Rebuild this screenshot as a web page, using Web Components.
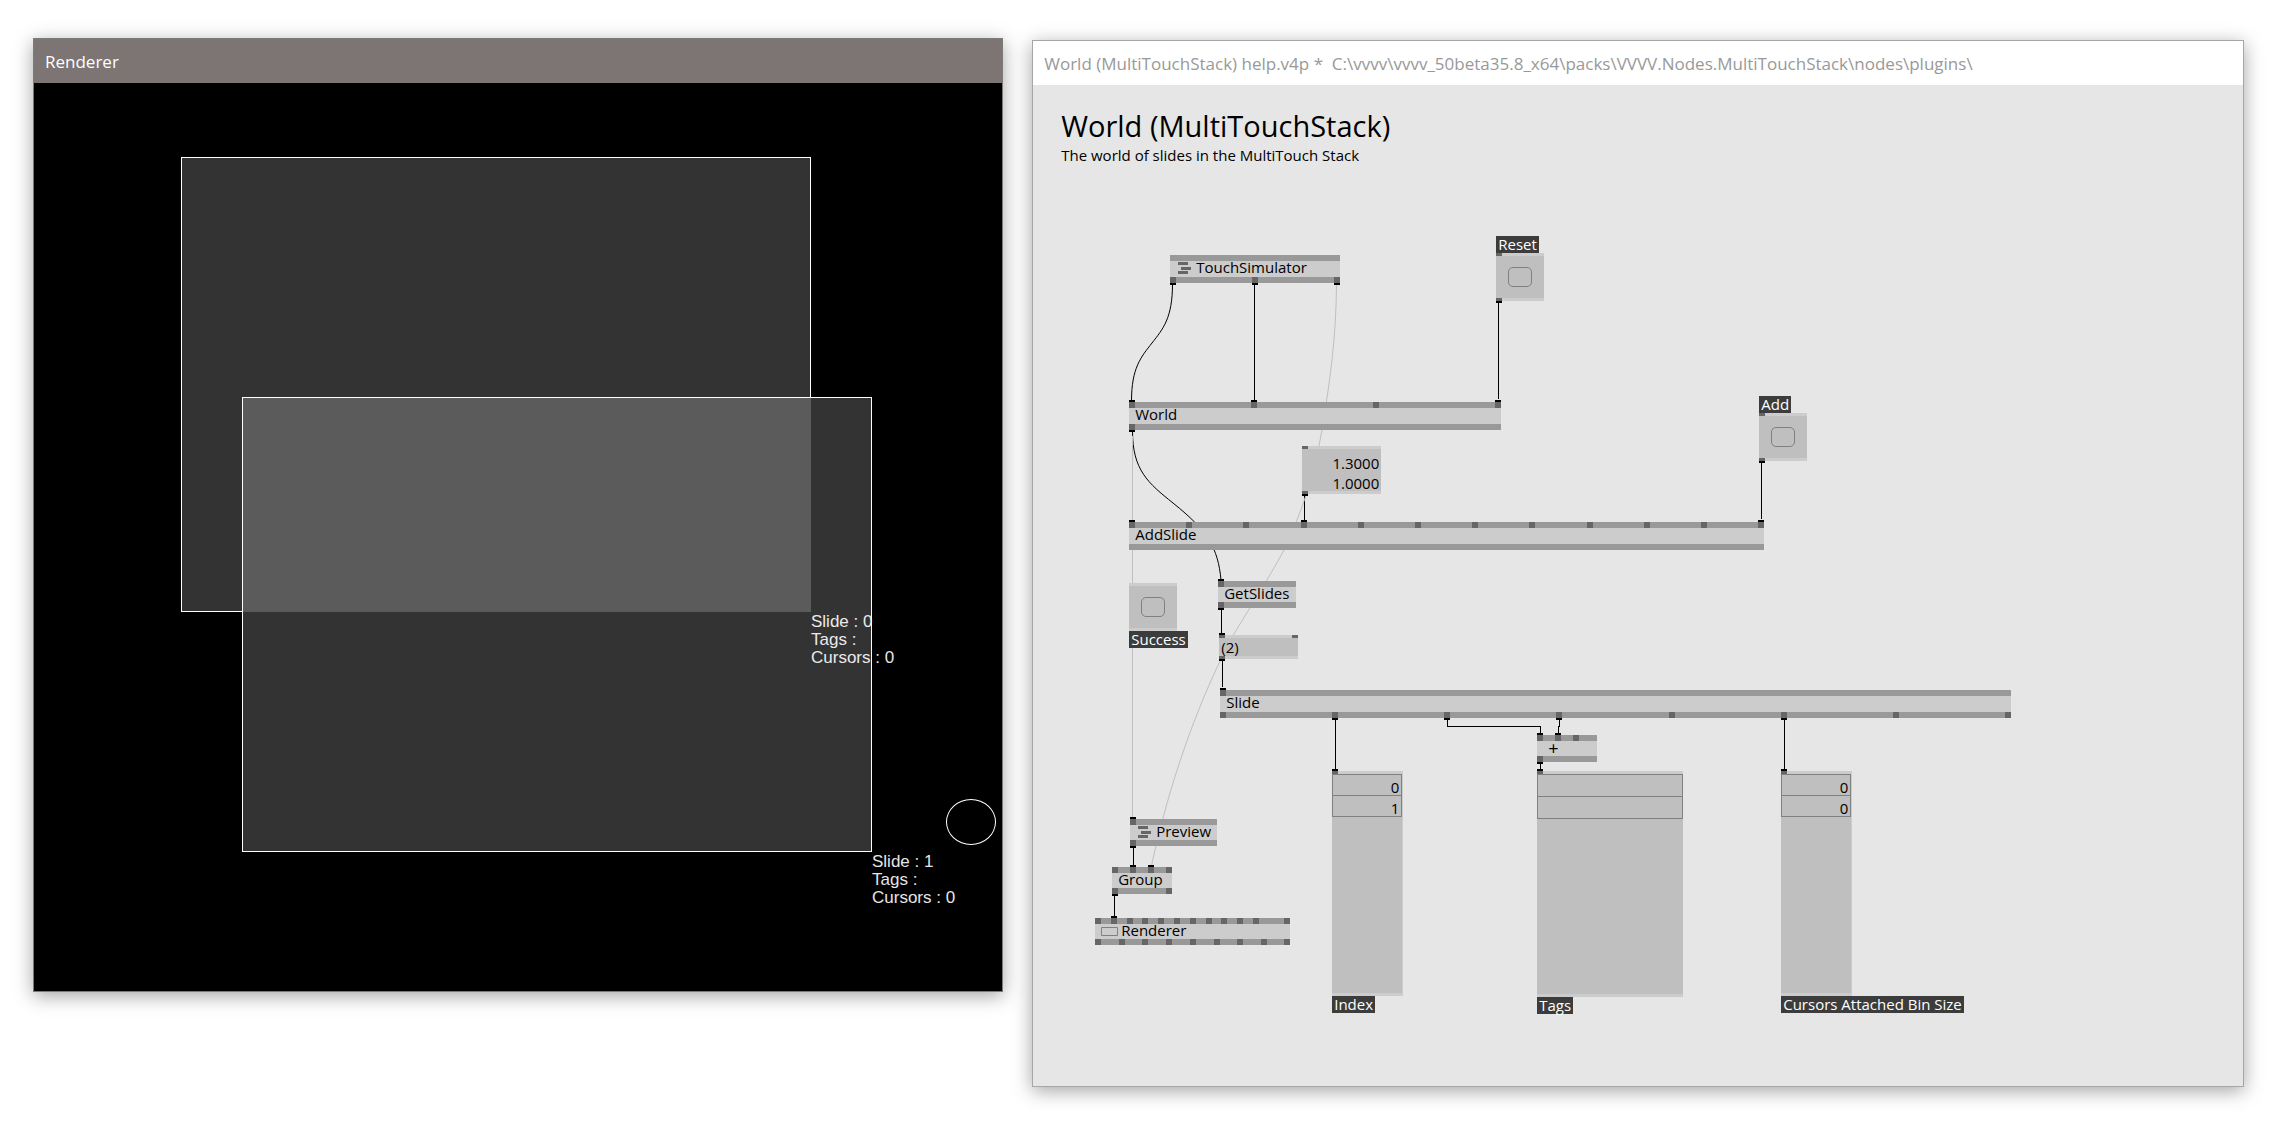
<!DOCTYPE html>
<html lang="en">
<head>
<meta charset="utf-8">
<title>World (MultiTouchStack) help</title>
<style>
  html { height: 100%; }
  body {
    margin: 0; min-height: 100vh; box-sizing: border-box;
    padding: 38px 48px 49px 33px;
    background: #fff;
    font-family: "Open Sans", "Noto Sans", sans-serif;
    display: flex;
  }
  patch-desktop { flex: 1; }
</style>
</head>
<body>
<patch-desktop>
  <app-window class="renderer" kind="dark" heading="Renderer">
    <touch-viewport>
      <touch-slide x="147" y="74" index="0" cursors="0" covered></touch-slide>
      <touch-slide x="208" y="314" index="1" cursors="0"></touch-slide>
      <touch-cursor></touch-cursor>
    </touch-viewport>
  </app-window>
  <app-window class="patch" kind="light" heading="World (MultiTouchStack) help.v4p *&nbsp; C:\vvvv\vvvv_50beta35.8_x64\packs\VVVV.Nodes.MultiTouchStack\nodes\plugins\">
    <patch-canvas>
      <patch-intro heading="World (MultiTouchStack)">The world of slides in the MultiTouch Stack</patch-intro>
      <patch-wires></patch-wires>

      <patch-node x="137" y="170" w="170" outs="0* 82* 164*" icon="module">TouchSimulator</patch-node>
      <patch-node x="96" y="317" w="372" ins="0* 122* 244 366*" outs="0*">World</patch-node>
      <patch-node x="96" y="437" w="635" ins="0* 57 114 172* 229 286 343 400 458 515 572 629*">AddSlide</patch-node>
      <patch-node x="185" y="496" w="78" h="27" ins="0*" outs="0*">GetSlides</patch-node>
      <patch-node x="187" y="605" w="791" ins="0*" outs="0 112* 224* 336* 449 561* 673 785">Slide</patch-node>
      <patch-node x="504" y="650" w="60" h="27" ins="0* 18* 36" outs="0*" icon="op">+</patch-node>
      <patch-node x="97" y="734" w="87" h="27" ins="0*" outs="0*" icon="module">Preview</patch-node>
      <patch-node x="79" y="782" w="60" h="27" ins="0 18* 36* 54" outs="0* 54">Group</patch-node>
      <patch-node x="62" y="833" w="195" h="27" ins="0 16* 32 47 63 79 95 111 126 142 158 189" outs="0 24 47 71 95 119 142 166 189" icon="window">Renderer</patch-node>

      <bang-box x="463" y="151" caption="Reset" ins="0" outs="0*"></bang-box>
      <bang-box x="726" y="311" caption="Add" ins="0" outs="0*"></bang-box>
      <bang-box x="96" y="498" caption="Success" below></bang-box>

      <value-box x="269" y="361" w="79" h="48" ins="0" outs="0*" values="1.3000 1.0000"></value-box>
      <value-box x="186" y="550" w="79" h="24" ins="0* 73" outs="0*" readout="(2)"></value-box>

      <spread-box x="299" y="686" w="71" h="225" row="21" values="0 1" caption="Index" ins="0*"></spread-box>
      <spread-box x="504" y="686" w="146" h="226" row="22" values="- -" caption="Tags" ins="0*" flush></spread-box>
      <spread-box x="748" y="686" w="71" h="225" row="21" values="0 0" caption="Cursors Attached Bin Size" ins="0*"></spread-box>
    </patch-canvas>
  </app-window>
</patch-desktop>

<script>
const pins = list => (list || '').split(' ').filter(Boolean).map(p =>
  `<i class="pin${p.endsWith('*') ? ' on' : ''}" style="left:${parseInt(p)}px"></i>`).join('');

const PIN_CSS = `
  .rail { position: relative; flex: none; }
  .pin { position: absolute; top: 0; width: 6px; height: 100%; background: #666; }
  .pin.on::before { content: ""; position: absolute; left: 0; width: 6px; height: 2px; background: #000; }
  .rail.in .pin.on::before { top: -2px; }
  .rail.out .pin.on::before { bottom: -2px; }
`;
const CAPTION_CSS = `
  .caption { display: block; width: max-content; height: 17px; padding: 0 2px; background: #3c3c3c; color: #fff;
    font-size: 15px; line-height: 17px; white-space: nowrap; }
`;

class BaseElement extends HTMLElement {
  connectedCallback() {
    if (this.shadowRoot) return;
    this.attachShadow({ mode: 'open' }).innerHTML = this.render();
  }
  at(name, fallback = '') { return this.hasAttribute(name) ? this.getAttribute(name) : fallback; }
  place() { return `position: absolute; left: ${this.at('x')}px; top: ${this.at('y')}px;`; }
}

customElements.define('patch-desktop', class extends BaseElement {
  render() {
    return `<style>
      :host { display: flex; gap: 29px; align-items: flex-start; }
      ::slotted(.renderer) { flex: 970 1 0; min-width: 0; }
      ::slotted(.patch) { flex: 1212 1 0; min-width: 0; margin-top: 2px; align-self: stretch; }
    </style><slot></slot>`;
  }
});

customElements.define('app-window', class extends BaseElement {
  render() {
    return `<style>
      :host { display: flex; flex-direction: column; box-sizing: border-box; border: 1px solid #a6a6a6;
        background: #e6e6e6; box-shadow: 0 4px 18px rgba(0,0,0,.36); }
      :host([kind="dark"]) { border-color: #7d7b7a; background: #000; }
      header { height: 44px; box-sizing: border-box; flex: none; display: flex; align-items: center; padding: 2px 11px 0; background: #fff; }
      h1 { margin: 0; font-size: 17px; line-height: 24px; font-weight: 400; color: #999; white-space: nowrap; overflow: hidden; }
      :host([kind="dark"]) header { background: #7c7574; }
      :host([kind="dark"]) h1 { color: #fff; }
      ::slotted(*) { flex: 1; }
    </style>
    <header><h1>${this.at('heading')}</h1></header><slot></slot>`;
  }
});

customElements.define('touch-viewport', class extends BaseElement {
  render() {
    return `<style>
      :host { display: block; position: relative; overflow: hidden; background: #000; aspect-ratio: 968 / 908; }
    </style><slot></slot>`;
  }
});

customElements.define('touch-slide', class extends BaseElement {
  render() {
    return `<style>
      :host { ${this.place()} display: block; width: 630px; height: 455px; background: rgba(255,255,255,.2); }
      .edge { position: absolute; inset: 0; border: 1px solid #fff; }
      :host([covered]) .edge { clip-path: polygon(0 0, 100% 0, 100% 240px, 61px 240px, 61px 100%, 0 100%); }
      p { position: absolute; left: 100%; top: 100%; margin: 0; padding-top: 1px; white-space: nowrap; color: #e6e6e6;
        font: 17px/18px "Liberation Sans", Arial, sans-serif; }
    </style>
    <div class="edge"></div>
    <p>Slide : ${this.at('index')}<br>Tags :<br>Cursors : ${this.at('cursors')}</p>`;
  }
});

customElements.define('touch-cursor', class extends BaseElement {
  render() {
    return `<style>
      :host { display: block; position: absolute; left: 912px; top: 716px; width: 50px; height: 46px;
        box-sizing: border-box; border: 1px solid #fff; border-radius: 50%; }
    </style>`;
  }
});

customElements.define('patch-canvas', class extends BaseElement {
  render() {
    return `<style>
      :host { display: block; position: relative; overflow: hidden; min-height: 960px; background: #e6e6e6; color: #000; }
    </style><slot></slot>`;
  }
});

customElements.define('patch-intro', class extends BaseElement {
  render() {
    return `<style>
      :host { display: block; padding: 24px 28px; font-size: 15px; line-height: 20px; }
      h2 { margin: 0; font-size: 29px; line-height: 34px; font-weight: 400; }
      p { margin: 2px 0 0; }
    </style><h2>${this.at('heading')}</h2><p><slot></slot></p>`;
  }
});

customElements.define('patch-wires', class extends BaseElement {
  render() {
    return `<style>
      :host { display: block; position: absolute; inset: 0; }
      svg { display: block; width: 100%; height: 100%; overflow: visible; fill: none; stroke: #000; }
      .soft { stroke: #bfbfbf; }
      .straight { shape-rendering: crispEdges; }
    </style>
    <svg aria-hidden="true"><g transform="translate(-1033 -85)">
      <path d="M1172.5 284C1172.5 318 1163 329 1152 343S1131.5 368 1131.5 401"/>
      <path d="M1132.5 431C1132.5 470 1148 483 1173 503C1208 531 1218 548 1221 580"/>
      <g class="straight">
        <path d="M1254.5 284V401M1498.5 302V399M1761.5 462V519M1304.5 495V521M1221.500 609V634M1222.500 660V687"/>
        <path d="M1335.500 719V770M1784.500 719V770M1540.500 763V770M1133.500 847V866M1114.500 895V917"/>
        <path d="M1447.500 719V726.500H1540.500V734M1559.500 719V726.500H1558.500V734"/>
      </g>
      <path class="soft straight" d="M1132.500 436V818"/>
      <path class="soft" d="M1336.500 285C1336 340 1330 380 1322 430C1314 475 1303 510 1283.500 551C1266 583 1250 607 1234 634C1215 668 1185 735 1163 818C1160 832 1154 852 1151.500 866"/>
    </g></svg>`;
  }
});

customElements.define('patch-node', class extends BaseElement {
  icon() {
    const kind = this.at('icon');
    if (kind === 'module') return `<svg width="20" height="12" aria-hidden="true"><path fill="#666" d="M2 0h10v3h-10zM5 5h10v3h-10zM2 9h10v3h-10z"/></svg>`;
    if (kind === 'window') return `<svg width="20" height="12" aria-hidden="true"><path fill="none" stroke="#808080" d="M.5 3.500h16v8h-16z"/></svg>`;
    return '';
  }
  render() {
    return `<style>${PIN_CSS}
      :host { ${this.place()} display: flex; flex-direction: column; width: ${this.at('w')}px; height: ${this.at('h', 28)}px; background: #ccc; }
      .rail { height: 6px; background: #999; }
      .body { flex: 1; min-height: 0; display: flex; padding-left: 6px; font-size: 15px; line-height: 13px; white-space: nowrap; }
      :host([icon="op"]) .body { padding-left: 11px; font-size: 18px; line-height: 14px; }
      svg { flex: none; display: block; margin-top: 1px; }
      :host([icon="window"]) svg { margin-top: 0; }
    </style>
    <div class="rail in">${pins(this.at('ins'))}</div>
    <div class="body">${this.icon()}<span><slot></slot></span></div>
    <div class="rail out">${pins(this.at('outs'))}</div>`;
  }
});

customElements.define('bang-box', class extends BaseElement {
  render() {
    const caption = `<label class="caption" for="bang">${this.at('caption')}</label>`;
    const below = this.hasAttribute('below');
    return `<style>${PIN_CSS}${CAPTION_CSS}
      :host { ${this.place()} display: block; }
      .box { display: flex; flex-direction: column; width: 48px; height: 48px; background: #ccc; }
      .rail { height: 3px; }
      .body { flex: 1; display: grid; place-items: center; background: #bfbfbf; }
      button { width: 24px; height: 20px; padding: 0; border: 1px solid #808080; border-radius: 5px; background: none; }
    </style>
    ${below ? '' : caption}
    <div class="box"><div class="rail in">${pins(this.at('ins'))}</div>
      <div class="body"><button id="bang" type="button"></button></div>
      <div class="rail out">${pins(this.at('outs'))}</div></div>
    ${below ? caption : ''}`;
  }
});

customElements.define('value-box', class extends BaseElement {
  render() {
    const fields = this.at('values').split(' ').filter(Boolean)
      .map((v, i) => `<input type="text" value="${v}" aria-label="Value ${i + 1}">`).join('');
    const readout = this.at('readout');
    return `<style>${PIN_CSS}
      :host { ${this.place()} display: flex; flex-direction: column; width: ${this.at('w')}px; height: ${this.at('h')}px; background: #ccc; }
      .rail { height: 3px; }
      .body { flex: 1; min-height: 0; display: flex; flex-direction: column; justify-content: flex-end; background: #bfbfbf; }
      input { display: block; box-sizing: border-box; width: 100%; height: 20px; margin: 0; padding: 3px 2px 0; border: 0;
        background: none; color: inherit; font: 15px/17px "Open Sans", sans-serif; text-align: right; }
      output { padding-left: 2px; font-size: 15px; line-height: 18px; }
    </style>
    <div class="rail in">${pins(this.at('ins'))}</div>
    <div class="body">${fields}${readout ? `<output>${readout}</output>` : ''}</div>
    <div class="rail out">${pins(this.at('outs'))}</div>`;
  }
});

customElements.define('spread-box', class extends BaseElement {
  render() {
    const rows = this.at('values').split(' ')
      .map(v => `<output>${v === '-' ? '' : v}</output>`).join('');
    return `<style>${PIN_CSS}${CAPTION_CSS}
      :host { ${this.place()} display: block; }
      .box { display: flex; flex-direction: column; width: ${this.at('w')}px; height: ${this.at('h')}px; background: #ccc; }
      .rail.in { height: 3px; }
      .rail.out { height: 3px; }
      .body { flex: 1; margin-right: 1px; background: #bfbfbf; }
      :host([flush]) .body { margin-right: 0; }
      .rows { border: 1px solid #808080; border-top: 0; display: block; }
      output { display: block; box-sizing: border-box; height: ${this.at('row')}px; border-top: 1px solid #808080;
        padding-right: 2px; font-size: 15px; line-height: 25px; text-align: right; }
    </style>
    <div class="box"><div class="rail in">${pins(this.at('ins'))}</div>
      <div class="body"><div class="rows">${rows}</div></div>
      <div class="rail out"></div></div>
    <span class="caption">${this.at('caption')}</span>`;
  }
});
</script>
</body>
</html>
